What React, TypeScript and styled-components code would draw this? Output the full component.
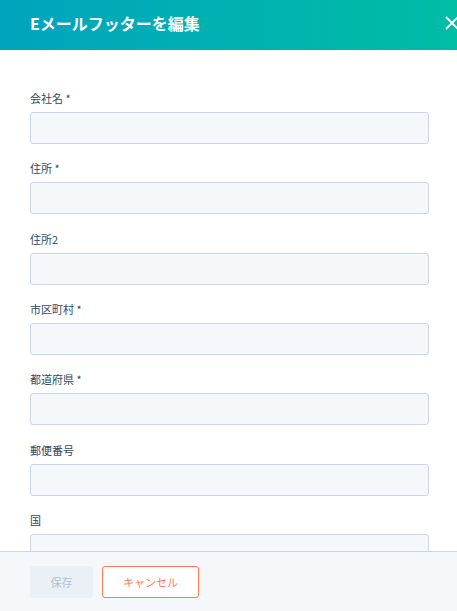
import React from "react";
import styled, { createGlobalStyle } from "styled-components";

const Global = createGlobalStyle`
  html, body { margin: 0; padding: 0; background: #fff; }
  body { font-family: "Noto Sans CJK JP", "Noto Sans", sans-serif; overflow: hidden; }
  * { box-sizing: border-box; }
`;

const Panel = styled.div`
  width: 457px;
  height: 611px;
  display: flex;
  flex-direction: column;
  overflow: hidden;
`;

const Header = styled.header`
  flex: 0 0 50px;
  display: flex;
  align-items: center;
  justify-content: space-between;
  padding: 0 0 4px 30px;
  background: linear-gradient(90deg, #00a4bd 0%, #00bda5 100%);
  color: #fff;
`;

const Title = styled.h1`
  margin: 0;
  font-size: 16px;
  font-weight: 700;
  line-height: 22px;
`;

const Close = styled.button`
  border: 0;
  background: transparent;
  padding: 0;
  margin-right: -2px;
  display: flex;
  cursor: pointer;
`;

const Body = styled.div`
  flex: 1;
  overflow: hidden;
  padding: 40px 28px 0 30px;
  display: flex;
  flex-direction: column;
  gap: 16.35px;
`;

const Field = styled.div`
  display: flex;
  flex-direction: column;
`;

const Label = styled.label`
  display: block;
  font-size: 11px;
  line-height: 16px;
  height: 16px;
  color: #33475b;
  margin-bottom: 6px;
`;

const Input = styled.input`
  height: 32px;
  width: 100%;
  border: 1px solid #cbd6e2;
  border-radius: 3px;
  background: #f5f8fa;
  outline: none;
  font: inherit;
  flex-shrink: 0;
`;

const Footer = styled.footer`
  flex: 0 0 60px;
  border-top: 1px solid #cbd6e2;
  background: #f5f8fa;
  display: flex;
  align-items: center;
  gap: 9px;
  padding: 0 0 0 30px;
`;

const Button = styled.button<{ $variant: "disabled" | "secondary" }>`
  height: 32px;
  border-radius: 3px;
  font-family: inherit;
  font-size: 11px;
  padding: 0;
  width: ${(p) => (p.$variant === "disabled" ? "63px" : "97px")};
  border: 1px solid ${(p) => (p.$variant === "disabled" ? "#eaf0f6" : "#ff7a59")};
  background: ${(p) => (p.$variant === "disabled" ? "#eaf0f6" : "#fff")};
  color: ${(p) => (p.$variant === "disabled" ? "#b0c1d4" : "#ff7a59")};
`;

const fields = [
  { label: "会社名", req: true },
  { label: "住所", req: true },
  { label: "住所2", req: false },
  { label: "市区町村", req: true },
  { label: "都道府県", req: true },
  { label: "郵便番号", req: false },
  { label: "国", req: false },
];

export default function App() {
  return (
    <>
      <Global />
      <Panel>
        <Header>
          <Title>Eメールフッターを編集</Title>
          <Close aria-label="閉じる">
            <svg width="14" height="14" viewBox="0 0 14 14">
              <path d="M1.5 1.5 L12.5 12.5 M12.5 1.5 L1.5 12.5" stroke="#fff" strokeWidth="1.8" strokeLinecap="round" />
            </svg>
          </Close>
        </Header>
        <Body>
          {fields.map((f) => (
            <Field key={f.label}>
              <Label>
                {f.label}
                {f.req ? " *" : ""}
              </Label>
              <Input />
            </Field>
          ))}
        </Body>
        <Footer>
          <Button $variant="disabled">保存</Button>
          <Button $variant="secondary">キャンセル</Button>
        </Footer>
      </Panel>
    </>
  );
}
